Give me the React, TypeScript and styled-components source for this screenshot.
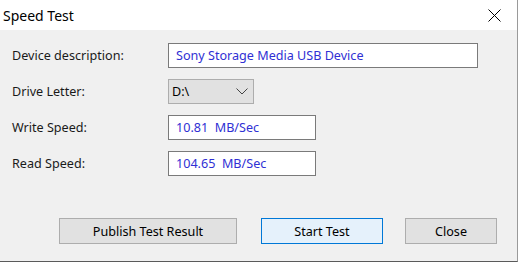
import React from 'react';
import styled, { createGlobalStyle } from 'styled-components';

const GlobalStyle = createGlobalStyle`
  html, body {
    margin: 0;
    padding: 0;
    background: #ffffff;
  }
  body {
    font-family: "Noto Sans", "Open Sans", sans-serif;
  }
`;

const Window = styled.div`
  width: 517px;
  height: 261px;
  border-right: 1px solid #9a9a9a;
  border-bottom: 1px solid #5a5a5a;
  display: flex;
  flex-direction: column;
  background: #f0f0f0;
`;

const TitleBar = styled.div`
  height: 30px;
  background: #ffffff;
  display: flex;
  align-items: center;
  justify-content: space-between;
  padding: 0 16px 0 3px;
`;

const Title = styled.span`
  font-size: 14px;
  color: #000;
`;

const CloseGlyph = styled.svg`
  width: 13px;
  height: 13px;
  margin-top: 1px;
`;

const Body = styled.div`
  flex: 1;
  display: flex;
  flex-direction: column;
  padding: 13px 0 0 12px;
`;

const Fields = styled.div`
  display: grid;
  grid-template-columns: 156px auto;
  row-gap: 11px;
  align-items: center;
`;

const Label = styled.div`
  font-size: 12.6px;
  color: #1a1a1a;
`;

const TextBox = styled.div<{ $width: number }>`
  width: ${(p) => p.$width}px;
  height: 25px;
  box-sizing: border-box;
  border: 1px solid #7a7a7a;
  background: #fff;
  color: #3030d4;
  font-size: 12.6px;
  display: flex;
  align-items: center;
  padding-left: 7px;
  white-space: pre;
`;

const Combo = styled.div`
  width: 86px;
  height: 25px;
  box-sizing: border-box;
  border: 1px solid #adadad;
  background: #e1e1e1;
  color: #000;
  font-size: 12.6px;
  display: flex;
  align-items: center;
  justify-content: space-between;
  padding: 0 5px 0 3px;
`;

const Chevron = styled.svg`
  width: 12px;
  height: 7px;
`;

const Buttons = styled.div`
  display: flex;
  margin-top: 42px;
  padding-left: 47px;
`;

const Button = styled.div<{ $width: number; $gap: number; $focused?: boolean }>`
  width: ${(p) => p.$width}px;
  height: 26px;
  margin-right: ${(p) => p.$gap}px;
  box-sizing: border-box;
  border: 1px solid ${(p) => (p.$focused ? '#0078d7' : '#adadad')};
  background: ${(p) => (p.$focused ? '#e5f1fb' : '#e1e1e1')};
  font-size: 12.6px;
  color: #000;
  display: flex;
  align-items: center;
  justify-content: center;
`;

const App: React.FC = () => {
  return (
    <>
      <GlobalStyle />
      <Window>
        <TitleBar>
          <Title>Speed Test</Title>
          <CloseGlyph viewBox="0 0 13 13">
            <path d="M0.5 0.5 L12.5 12.5 M12.5 0.5 L0.5 12.5" stroke="#000" strokeWidth="1" fill="none" />
          </CloseGlyph>
        </TitleBar>
        <Body>
          <Fields>
            <Label>Device description:</Label>
            <TextBox $width={310}>Sony Storage Media USB Device</TextBox>
            <Label>Drive Letter:</Label>
            <Combo>
              <span>D:\</span>
              <Chevron viewBox="0 0 12 7">
                <path d="M0.5 0.5 L6 6 L11.5 0.5" stroke="#444" strokeWidth="1" fill="none" />
              </Chevron>
            </Combo>
            <Label>Write Speed:</Label>
            <TextBox $width={148}>10.81  MB/Sec</TextBox>
            <Label>Read Speed:</Label>
            <TextBox $width={148}>104.65  MB/Sec</TextBox>
          </Fields>
          <Buttons>
            <Button $width={178} $gap={24}>Publish Test Result</Button>
            <Button $width={122} $gap={22} $focused>Start Test</Button>
            <Button $width={92} $gap={0}>Close</Button>
          </Buttons>
        </Body>
      </Window>
    </>
  );
};

export default App;
